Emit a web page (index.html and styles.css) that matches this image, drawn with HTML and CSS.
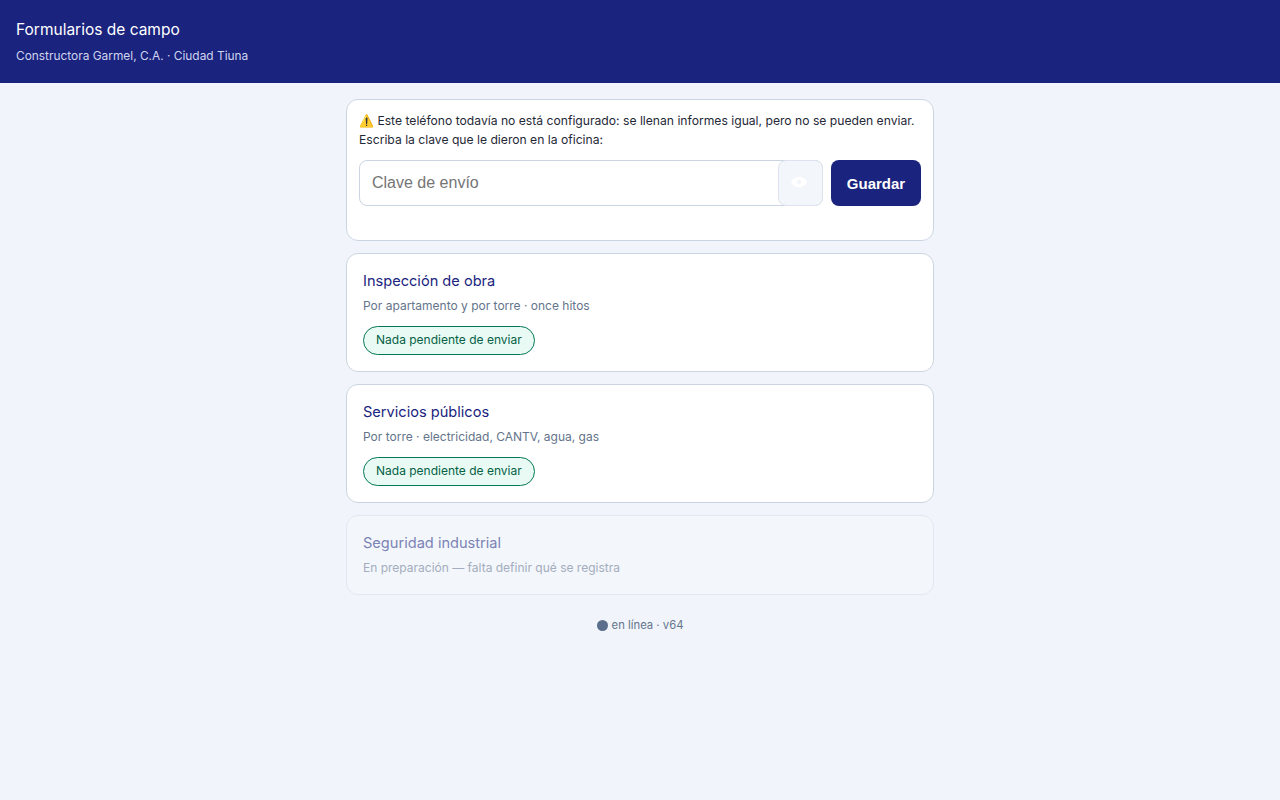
FILE: index.html
```html
<!DOCTYPE html>
<html lang="es">
  <head>
    <meta charset="UTF-8" />
    <meta name="viewport" content="width=device-width, initial-scale=1.0" />
    <title>Formularios de campo</title>
    <link rel="stylesheet" href="styles.css">
  </head>
  <body>
    <header class="header">
      <div class="header_title">Formularios de campo</div>
      <div class="header_sub">Constructora Garmel, C.A. · Ciudad Tiuna</div>
    </header>
    <main class="container">
      <section class="card card_setup">
        <p class="setup_text">⚠️ Este teléfono todavía no está configurado: se llenan informes igual, pero no se pueden enviar.<br />Escriba la clave que le dieron en la oficina:</p>
        <div class="setup_row">
          <div class="key_field">
            <input class="key_input" type="password" placeholder="Clave de envío" />
            <button class="key_eye" type="button" aria-label="Mostrar clave">
              <svg width="18" height="12" viewBox="0 0 18 12">
                <path d="M9 1C5.2 1 2.2 3.2 1 6c1.2 2.8 4.2 5 8 5s6.800-2.200 8-5c-1.200-2.800-4.200-5-8-5z" fill="#ffffff" />
                <circle cx="9" cy="6" r="2.200" fill="#f3f6fb" />
              </svg>
            </button>
          </div>
          <button class="save_btn" type="button">Guardar</button>
        </div>
      </section>
      <section class="card">
        <h2 class="card_title">Inspección de obra</h2>
        <p class="card_desc">Por apartamento y por torre · once hitos</p>
        <span class="pill">Nada pendiente de enviar</span>
      </section>
      <section class="card">
        <h2 class="card_title">Servicios públicos</h2>
        <p class="card_desc">Por torre · electricidad, CANTV, agua, gas</p>
        <span class="pill">Nada pendiente de enviar</span>
      </section>
      <section class="card card_disabled">
        <h2 class="card_title">Seguridad industrial</h2>
        <p class="card_desc">En preparación — falta definir qué se registra</p>
      </section>
      <footer class="status">
        <span class="status_dot"></span>
        <span>en línea · v64</span>
      </footer>
    </main>
  </body>
</html>
```

FILE: styles.css
```css
* {
  box-sizing: border-box;
}
body {
  margin: 0;
  min-height: 100vh;
  background-color: #f1f5fb;
  font-family: Inter, "Liberation Sans", sans-serif;
  color: #1f2937;
}
.header {
  height: 83px;
  padding: 20px 16px 0;
  background-color: #1a237e;
  color: #fff;
}
.header_title {
  font-size: 15.5px;
  line-height: 19px;
}
.header_sub {
  margin-top: 9px;
  font-size: 11.9px;
  line-height: 15px;
  color: #cfd4ef;
}
.container {
  display: flex;
  flex-direction: column;
  row-gap: 12px;
  margin: 0 auto;
  padding-top: 16px;
  width: 588px;
}
.card {
  padding: 16px;
  background-color: #fff;
  border: 1px solid #cbd5e1;
  border-radius: 12px;
}
.card_setup {
  padding: 11px 12px;
  height: 142px;
}
.setup_text {
  margin: 0;
  font-size: 12.15px;
  line-height: 19px;
}
.setup_row {
  display: flex;
  column-gap: 8px;
  margin-top: 11px;
}
.key_field {
  position: relative;
  flex: 1;
}
.key_input {
  width: 100%;
  height: 46px;
  padding: 0 56px 0 12px;
  border: 1px solid #cbd5e1;
  border-radius: 8px;
  font-family: "Liberation Sans", sans-serif;
  font-size: 16px;
  outline: none;
}
.key_eye {
  position: absolute;
  top: 0;
  right: 0;
  display: flex;
  justify-content: center;
  align-items: center;
  padding: 0 3px 3px 0;
  width: 45px;
  height: 46px;
  background-color: #f3f6fb;
  border: 1px solid #dde3ee;
  border-radius: 8px;
}
.save_btn {
  width: 90px;
  height: 46px;
  background-color: #1a237e;
  border: none;
  border-radius: 8px;
  color: #fff;
  font-family: "Liberation Sans", sans-serif;
  font-size: 15px;
  font-weight: 700;
}
.card_title {
  margin: 0;
  font-size: 14.6px;
  font-weight: 400;
  line-height: 22px;
  color: #1a237e;
}
.card_desc {
  margin: 5px 0 0;
  font-size: 12px;
  line-height: 17px;
  color: #64748b;
}
.pill {
  display: inline-block;
  margin-top: 12px;
  padding: 0 12px;
  height: 29px;
  line-height: 26px;
  background-color: #e8faf3;
  border: 1px solid #047857;
  border-radius: 15px;
  font-size: 12px;
  color: #065f46;
}
.card_disabled {
  padding-bottom: 18px;
  background-color: #f3f6fb;
  border-color: #e2e8f0;
}
.card_disabled .card_title {
  color: #7b83b5;
}
.card_disabled .card_desc {
  color: #a3adbd;
}
.status {
  display: flex;
  justify-content: center;
  align-items: center;
  column-gap: 4px;
  margin-top: 10px;
  font-size: 11.3px;
  line-height: 16px;
  color: #64748b;
}
.status_dot {
  width: 11px;
  height: 11px;
  background-color: #5b6f8c;
  border-radius: 50%;
}
```
